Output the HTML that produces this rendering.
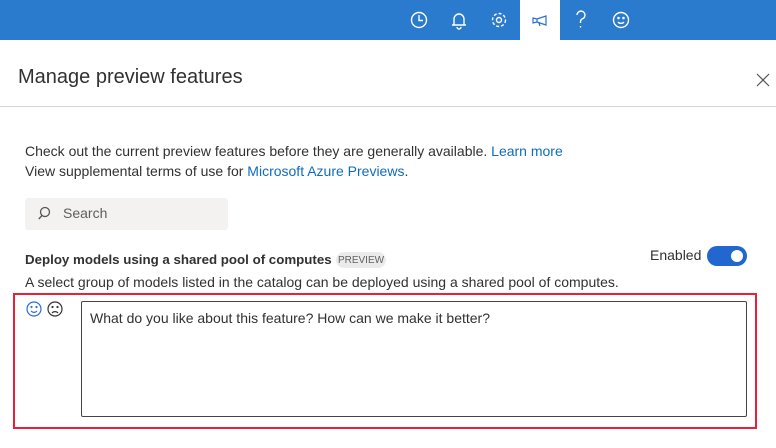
<!DOCTYPE html><html><head><style>
body{margin:0;width:776px;height:448px;overflow:hidden;background:#fff;font-family:"Liberation Sans",sans-serif;color:#323130;position:relative}
.a{position:absolute}
</style></head><body>
<div class="a" style="left:0;top:0;width:776px;height:40px;background:#2a7acd"></div>
<div class="a" style="left:520px;top:0;width:40px;height:40px;background:#fff"></div>
<svg class="a" style="left:0;top:0" width="776" height="40" fill="none" stroke="#fff" stroke-width="1.4">
<circle cx="419" cy="20" r="7.5"/><path d="M419 15v5.5h4"/>
<path d="M454 25V19a5 5 0 0 1 10 0v6M452 25h14M457 27a2 2 0 0 0 4 0"/>
<circle cx="499" cy="20" r="2.5"/><circle cx="499" cy="20" r="6.5" stroke-dasharray="3 2"/>
<path d="M533 18l4 1v3l-4 1zM537 19l9-3v9l-9-3M539 23l1 3" stroke="#2a6fd6" stroke-width="1.2"/>
<path d="M577 15a4 4 0 1 1 5 4c-1 .5-1.5 1.5-1.5 3v1M580.5 26v1.5"/>
<circle cx="621" cy="20" r="7.5"/><path d="M618 22a4 4 0 0 0 6 0"/><circle cx="618.5" cy="18" r=".6" fill="#fff"/><circle cx="623.5" cy="18" r=".6" fill="#fff"/>
</svg>
<div class="a" style="left:18px;top:66px;font-size:20px">Manage preview features</div>
<svg class="a" style="left:756px;top:73px" width="14" height="14" stroke="#555" stroke-width="1.2"><path d="M1 1l12 12M13 1L1 13"/></svg>
<div class="a" style="left:0;top:106px;width:776px;height:1px;background:#d6d6d6"></div>
<div class="a" style="left:25px;top:141px;font-size:14px;line-height:20px">Check out the current preview features before they are generally available. <span style="color:#0f6cbd">Learn more</span><br>View supplemental terms of use for <span style="color:#0f6cbd">Microsoft Azure Previews</span>.</div>
<div class="a" style="left:25px;top:198px;width:203px;height:32px;background:#f3f2f1;border-radius:3px"></div>
<svg class="a" style="left:38px;top:206px" width="16" height="16" fill="none" stroke="#555" stroke-width="1.3"><circle cx="7" cy="6" r="4.5"/><path d="M4 9.5L0.8 13"/></svg>
<div class="a" style="left:63px;top:205px;font-size:14px;color:#605e5c">Search</div>
<div class="a" style="left:25px;top:252px;font-size:13.3px;font-weight:bold">Deploy models using a shared pool of computes</div>
<div class="a" style="left:336px;top:252px;width:50px;height:16px;border-radius:8px;background:#ebebeb;font-size:10px;color:#616161;text-align:center;line-height:17px">PREVIEW</div>
<div class="a" style="left:650px;top:247px;font-size:14px">Enabled</div>
<div class="a" style="left:707px;top:246px;width:40px;height:20px;border-radius:10px;background:#2266d0"></div>
<div class="a" style="left:731px;top:250px;width:12px;height:12px;border-radius:6px;background:#fff"></div>
<div class="a" style="left:25px;top:274px;font-size:14px">A select group of models listed in the catalog can be deployed using a shared pool of computes.</div>
<div class="a" style="left:13px;top:293px;width:740px;height:132px;border:2px solid #e8203a"></div>
<svg class="a" style="left:26px;top:300px" width="40" height="20" fill="none" stroke-width="1.2">
<g stroke="#2a6fd6"><circle cx="8" cy="9" r="7"/><path d="M5 11a4 4 0 0 0 6 0"/><circle cx="5.5" cy="7" r=".5"/><circle cx="10.5" cy="7" r=".5"/></g>
<g stroke="#333"><circle cx="29" cy="9" r="7"/><path d="M26 13a4 4 0 0 1 6 0"/><circle cx="26.5" cy="7" r=".5"/><circle cx="31.5" cy="7" r=".5"/></g>
</svg>
<div class="a" style="left:81px;top:301px;width:664px;height:114px;border:1px solid #444;border-radius:2px"></div>
<div class="a" style="left:90px;top:310px;font-size:14px">What do you like about this feature? How can we make it better?</div>
</body></html>
